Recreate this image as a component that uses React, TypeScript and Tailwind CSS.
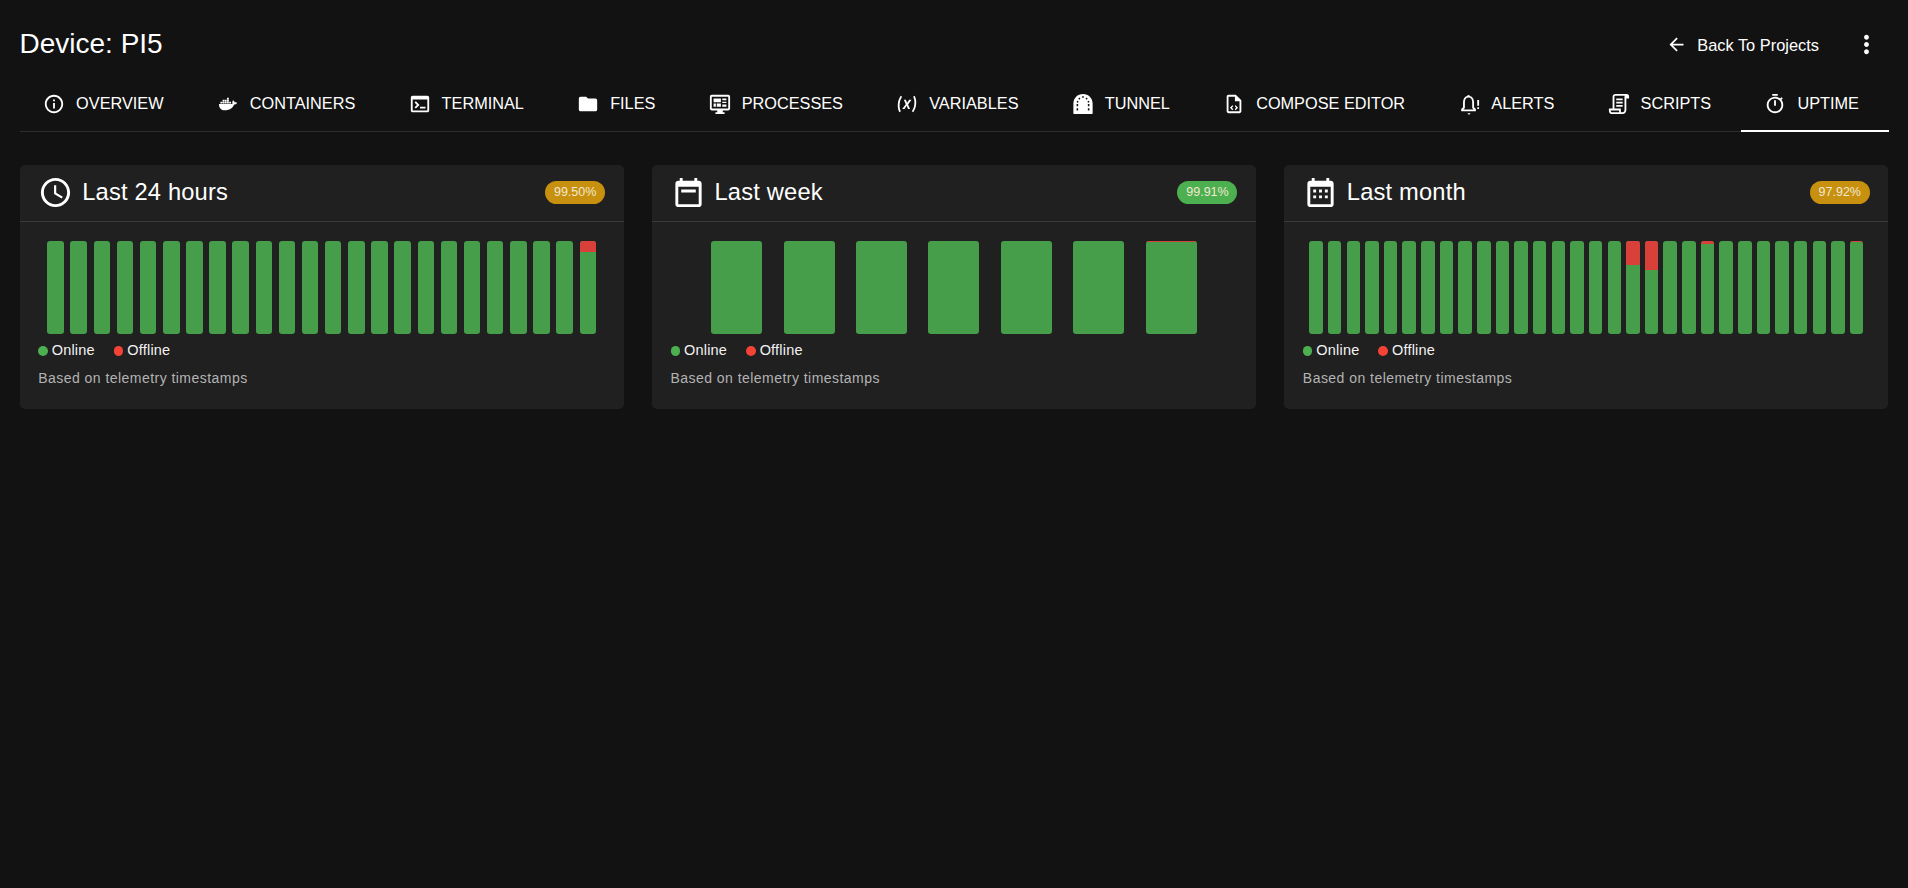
import React from 'react';
import { FaDocker } from 'react-icons/fa';

type IconProps = { className?: string };

const Svg = ({ className, children }: IconProps & { children: React.ReactNode }) => (
  <svg viewBox="0 0 24 24" fill="currentColor" className={className}>
    {children}
  </svg>
);

const InfoIcon = ({ className }: IconProps) => (
  <Svg className={className}>
    <path d="M11 7h2v2h-2zm0 4h2v6h-2zm1-9C6.48 2 2 6.48 2 12s4.48 10 10 10 10-4.48 10-10S17.52 2 12 2zm0 18c-4.41 0-8-3.59-8-8s3.59-8 8-8 8 3.59 8 8-3.59 8-8 8z" />
  </Svg>
);

const DockerIcon = ({ className }: IconProps) => (
  <span className={`${className} flex items-center justify-center`}>
    <FaDocker className="w-[18px] h-[18px]" />
  </span>
);

const TerminalIcon = ({ className }: IconProps) => (
  <Svg className={className}>
    <path d="M20 3H4c-1.11 0-2 .9-2 2v14c0 1.1.89 2 2 2h16c1.1 0 2-.9 2-2V5c0-1.1-.9-2-2-2zm0 16H4V7h16v12zm-2-2h-6v-2h6v2zM7.5 17l-1.41-1.41L8.67 13l-2.59-2.59L7.5 9l4 4-4 4z" />
  </Svg>
);

const FolderIcon = ({ className }: IconProps) => (
  <Svg className={className}>
    <path d="M10 4H4c-1.1 0-1.99.9-1.99 2L2 18c0 1.1.9 2 2 2h16c1.1 0 2-.9 2-2V8c0-1.1-.9-2-2-2h-8l-2-2z" />
  </Svg>
);

const ProcessIcon = ({ className }: IconProps) => (
  <Svg className={className}>
    <path
      fillRule="evenodd"
      d="M3 2h18c1.1 0 2 .9 2 2v13c0 1.1-.9 2-2 2h-6v2h2v2H7v-2h2v-2H3c-1.1 0-2-.9-2-2V4c0-1.1.9-2 2-2zm0 2v13h18V4H3z"
    />
    <path d="M5 6h8v4H5zM14.500 6H19v2h-4.500zM14.500 9.500H19V11h-4.500zM5 11.500h2.500V15H5zM8.500 11.500H13V15H8.500zM14.500 12.500H19V15h-4.500z" />
  </Svg>
);

const VariableIcon = ({ className }: IconProps) => (
  <Svg className={className}>
    <path d="M20.41 3c1.39 2.71 1.94 5.84 1.59 9-.2 3.16-1.300 6.29-3.170 9l-1.530-1c1.610-2.430 2.550-5.200 2.700-8 .34-2.800-.11-5.570-1.300-8l1.710-1M5.170 3 6.700 4C5.090 6.430 4.150 9.200 4 12c-.34 2.800.12 5.570 1.300 8l-1.690 1C2.200 18.290 1.650 15.170 2 12c.2-3.160 1.300-6.290 3.170-9m6.910 7.680 2.320-3.230h2.530l-3.780 5 2.200 4.920h-2.260L11.710 14l-2.430 3.330H6.760l3.900-5.120-2.130-4.760h2.270l1.280 3.230z" />
  </Svg>
);

const TunnelIcon = ({ className }: IconProps) => (
  <Svg className={className}>
    <path
      fillRule="evenodd"
      d="M12 1C6 1 1.500 5.500 1.500 11.500V22c0 .6.4 1 1 1h19c.6 0 1-.4 1-1V11.500C22.500 5.500 18 1 12 1zM5 12h1.700v2.500H5zm0 4.500h1.700V19H5zm12.300-4.500H19v2.500h-1.700zm0 4.500H19V19h-1.700zM5.500 8.500l1.600.5-.5 1.500-1.600-.5zm13 0-1.600.5.5 1.500 1.600-.5zM8 5l1.200 1.100-1.100 1.200-1.200-1.100zm8 0-1.200 1.100 1.100 1.200 1.200-1.100zM11.100 3.500h1.800v1.700h-1.800z"
    />
  </Svg>
);

const FileCodeIcon = ({ className }: IconProps) => (
  <Svg className={className}>
    <path
      fillRule="evenodd"
      d="M6 2h8l6 6v12c0 1.100-.9 2-2 2H6c-1.100 0-2-.9-2-2V4c0-1.100.9-2 2-2zm0 2v16h12V9h-5V4H6zm4.200 9.300 1 1-1.500 1.700 1.500 1.700-1 1-2.600-2.700zm3.600 0 2.600 2.700-2.600 2.700-1-1 1.500-1.700-1.500-1.700z"
    />
  </Svg>
);

const BellIcon = ({ className }: IconProps) => (
  <Svg className={className}>
    <path
      fillRule="evenodd"
      d="M10.500 22h3a1.500 1.500 0 0 1-3 0zM10 3.200a1.500 1.500 0 0 1 2.900 0C16 4 17.500 6.800 17.500 10v5.500l2 2V20h-16v-2.500l2-2V10c0-3.200 1.500-6 4.500-6.800zM11.500 5C8.800 5 7.500 7.200 7.500 10v6.300L6 18h11l-1.500-1.700V10c0-2.800-1.300-5-4-5z"
    />
    <path d="M21 7.500h2V14h-2zM21 15.500h2v2h-2z" />
  </Svg>
);

const ScrollIcon = ({ className }: IconProps) => (
  <Svg className={className}>
    <path
      fillRule="evenodd"
      d="M8 1h12.500C22 1 23 2 23 3.500V6h-3v12.500c0 2.500-1.800 4.500-4.200 4.500H4.500C2.500 23 1 21.500 1 19.500V17h4V4c0-1.700 1.300-3 3-3zm0 2c-.6 0-1 .4-1 1v13h7v2.500c0 .6.1 1.100.4 1.500h1.300c1.300 0 2.300-1.100 2.300-2.500V4c0-.4.1-.7.2-1H8zM3 19v.5C3 20.300 3.700 21 4.500 21h8a4 4 0 0 1-.5-1.500V19H3zM9 6h7v2H9zm0 3.500h7v2H9zm0 3.500h7v2H9z"
    />
  </Svg>
);

const TimerIcon = ({ className }: IconProps) => (
  <Svg className={className}>
    <path d="M15 1H9v2h6V1zm-4 13h2V8h-2v6zm8.030-6.610 1.420-1.420c-.43-.51-.9-.99-1.410-1.410l-1.420 1.420C16.070 4.740 14.120 4 12 4c-4.970 0-9 4.030-9 9s4.020 9 9 9 9-4.030 9-9c0-2.120-.74-4.070-1.970-5.610zM12 20c-3.870 0-7-3.130-7-7s3.130-7 7-7 7 3.130 7 7-3.130 7-7 7z" />
  </Svg>
);

const ClockIcon = ({ className }: IconProps) => (
  <Svg className={className}>
    <path d="M11.990 2C6.470 2 2 6.480 2 12s4.470 10 9.990 10C17.520 22 22 17.520 22 12S17.520 2 11.990 2zM12 20c-4.420 0-8-3.580-8-8s3.580-8 8-8 8 3.580 8 8-3.580 8-8 8z" />
    <path d="M12.500 7H11v6l5.250 3.150.75-1.230-4.500-2.670z" />
  </Svg>
);

const WeekIcon = ({ className }: IconProps) => (
  <Svg className={className}>
    <path
      fillRule="evenodd"
      d="M6 2h2v2h8V2h2v2h1c1.100 0 2 .9 2 2v14c0 1.100-.9 2-2 2H5c-1.110 0-2-.9-2-2V6c0-1.100.89-2 2-2h1V2zM5 8v12h14V8H5zm2 2h10v2H7v-2z"
    />
  </Svg>
);

const MonthIcon = ({ className }: IconProps) => (
  <Svg className={className}>
    <path
      fillRule="evenodd"
      d="M6 2h2v2h8V2h2v2h1c1.100 0 2 .9 2 2v14c0 1.100-.9 2-2 2H5c-1.110 0-2-.9-2-2V6c0-1.100.89-2 2-2h1V2zM5 8v12h14V8H5zm2 2h2v2H7v-2zm4 0h2v2h-2v-2zm4 0h2v2h-2v-2zm-8 4h2v2H7v-2zm4 0h2v2h-2v-2zm4 0h2v2h-2v-2z"
    />
  </Svg>
);

const tabs = [
  { label: 'Overview', icon: InfoIcon },
  { label: 'Containers', icon: DockerIcon },
  { label: 'Terminal', icon: TerminalIcon },
  { label: 'Files', icon: FolderIcon },
  { label: 'Processes', icon: ProcessIcon },
  { label: 'Variables', icon: VariableIcon },
  { label: 'Tunnel', icon: TunnelIcon },
  { label: 'Compose Editor', icon: FileCodeIcon },
  { label: 'Alerts', icon: BellIcon },
  { label: 'Scripts', icon: ScrollIcon },
  { label: 'Uptime', icon: TimerIcon, active: true },
];

// percent of each bar that was offline, keyed by bar index
const cards = [
  {
    title: 'Last 24 hours',
    icon: ClockIcon,
    percent: '99.50%',
    badge: 'bg-[#c8900f]',
    count: 24,
    offline: { 23: 12 } as Record<number, number>,
    barClass: 'w-[16.5px]',
    gapClass: 'gap-[6.65px]',
  },
  {
    title: 'Last week',
    icon: WeekIcon,
    percent: '99.91%',
    badge: 'bg-[#4caf50]',
    count: 7,
    offline: { 6: 0.6 } as Record<number, number>,
    barClass: 'w-[51px]',
    gapClass: 'gap-[21.4px]',
  },
  {
    title: 'Last month',
    icon: MonthIcon,
    percent: '97.92%',
    badge: 'bg-[#c8900f]',
    count: 30,
    offline: { 17: 26, 18: 31, 21: 3.6, 29: 0.6 } as Record<number, number>,
    barClass: 'w-[13.5px]',
    gapClass: 'gap-[5.15px]',
  },
];

const UptimeCard = ({ card }: { card: (typeof cards)[number] }) => {
  const Icon = card.icon;
  return (
    <div className="bg-[#202020] rounded-[5px] h-[244px] overflow-hidden">
      <div className="h-[57px] px-[18.7px] pb-[1px] flex items-center justify-between border-b border-[#393939]">
        <div className="flex items-center gap-[9px]">
          <Icon className="w-[35px] h-[35px]" />
          <span className="text-[23.7px] tracking-[0.18px]">{card.title}</span>
        </div>
        <span className={`${card.badge} h-[23px] w-[60px] rounded-full flex items-center justify-center text-[12.5px] text-[#f0e8d0]`}>
          {card.percent}
        </span>
      </div>
      <div className="px-[18.7px] pt-[19px]">
        <div className={`flex justify-center h-[93px] ${card.gapClass}`}>
          {Array.from({ length: card.count }).map((_, i) => (
            <div key={i} className={`${card.barClass} h-full rounded-[3px] overflow-hidden flex flex-col bg-[#469e4a]`}>
              {card.offline[i] && (
                <div className="bg-[#d9403a]" style={{ height: `${card.offline[i]}%` }} />
              )}
            </div>
          ))}
        </div>
        <div className="flex items-center gap-[19px] mt-[7px] h-[20px] text-[14.5px] tracking-[0.2px] text-[#f2f2f2]">
          <span className="flex items-center gap-[4px]">
            <span className="w-[9.5px] h-[9.5px] rounded-full bg-[#4caf50]" />
            Online
          </span>
          <span className="flex items-center gap-[4px]">
            <span className="w-[9.5px] h-[9.5px] rounded-full bg-[#f44336]" />
            Offline
          </span>
        </div>
        <p className="mt-[7px] text-[14px] tracking-[0.46px] text-[#b3b3b3]">Based on telemetry timestamps</p>
      </div>
    </div>
  );
};

export default function App() {
  return (
    <div className="min-h-[888px] bg-[#121212] text-white px-[19.5px] font-['Liberation_Sans',sans-serif]">
      <div className="h-[76px] pt-[12px] flex items-center justify-between">
        <h1 className="text-[28px] font-normal">Device: PI5</h1>
        <div className="flex items-center gap-[41px] pr-[15.5px]">
          <button className="flex items-center gap-[10px] text-[16.4px] mt-[2px]">
            <Svg className="w-[21px] h-[21px]">
              <path d="M20 11H7.830l5.590-5.590L12 4l-8 8 8 8 1.410-1.410L7.830 13H20v-2z" />
            </Svg>
            Back To Projects
          </button>
          <Svg className="w-[29px] h-[29px] -mx-[8px]">
            <path d="M12 8c1.100 0 2-.9 2-2s-.9-2-2-2-2 .9-2 2 .9 2 2 2zm0 2c-1.100 0-2 .9-2 2s.9 2 2 2 2-.9 2-2-.9-2-2-2zm0 6c-1.100 0-2 .9-2 2s.9 2 2 2 2-.9 2-2-.9-2-2-2z" />
          </Svg>
        </div>
      </div>

      <div className="flex h-[56px] border-b border-[#2e2e2e]">
        {tabs.map((tab) => {
          const Icon = tab.icon;
          return (
            <div
              key={tab.label}
              className={`flex-auto flex items-center justify-center gap-[11px] pt-[1px] pr-[6px] uppercase text-[16.3px] whitespace-nowrap border-b-[2.4px] -mb-px ${
                tab.active ? 'border-white' : 'border-transparent'
              }`}
            >
              <Icon className="w-[22px] h-[22px]" />
              {tab.label}
            </div>
          );
        })}
      </div>

      <div className="grid grid-cols-3 gap-[28px] mt-[33px]">
        {cards.map((card) => (
          <UptimeCard key={card.title} card={card} />
        ))}
      </div>
    </div>
  );
}
